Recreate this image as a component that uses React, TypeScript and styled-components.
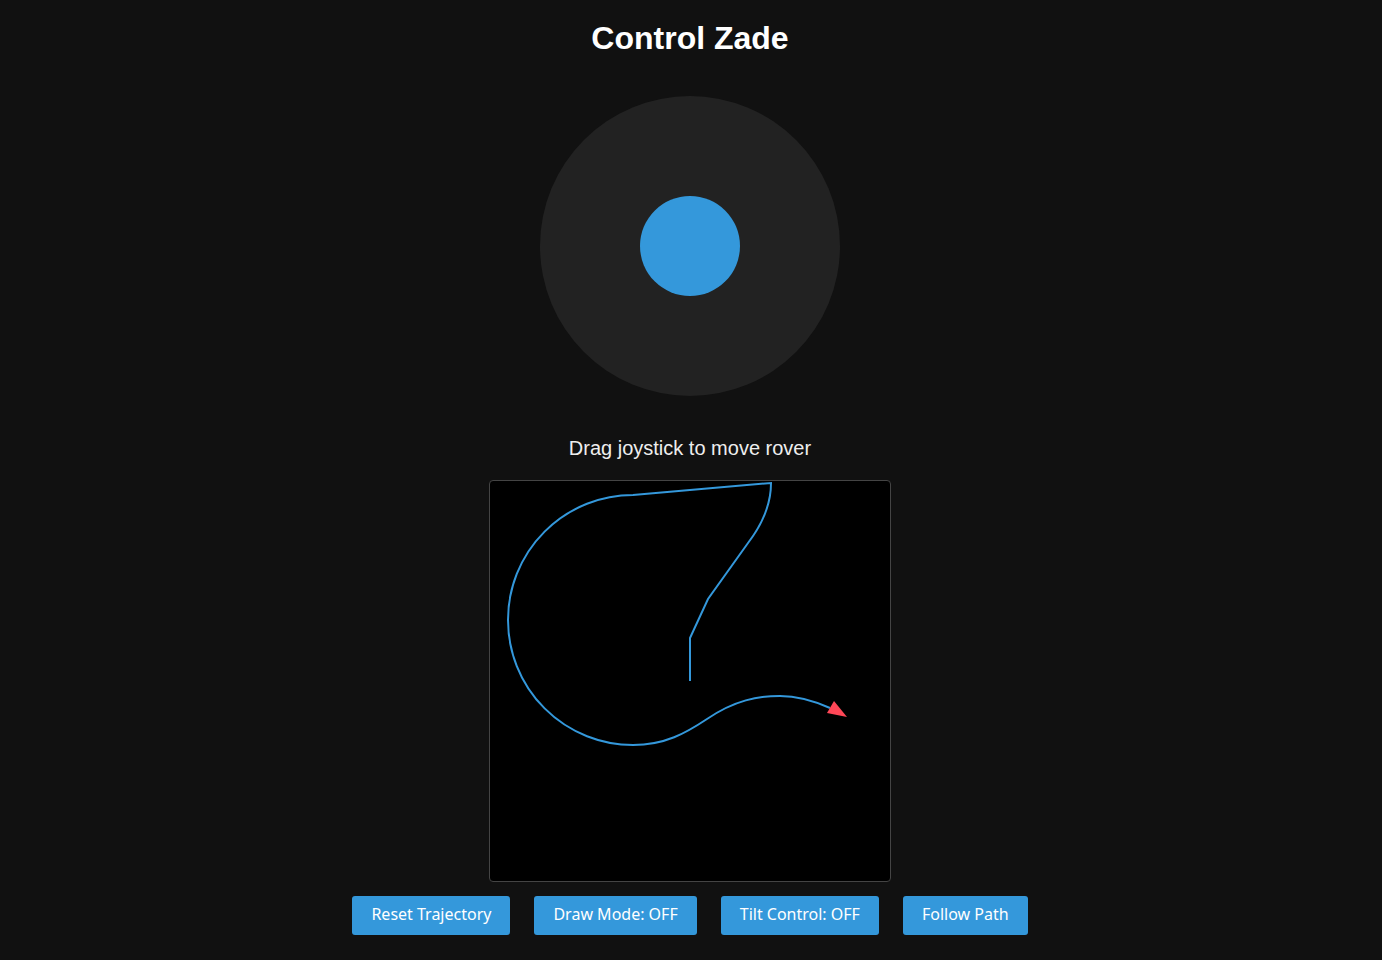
import styled, { createGlobalStyle } from "styled-components"

const GlobalStyle = createGlobalStyle`
  body {
    margin: 0;
    background: #111;
    color: #fff;
    font-family: "Liberation Sans", Arial, sans-serif;
  }
`

const buttons = ["Reset Trajectory", "Draw Mode: OFF", "Tilt Control: OFF", "Follow Path"]

export default function App() {
  return (
    <Page>
      <GlobalStyle />
      <Title>Control Zade</Title>
      <JoystickBase>
        <Knob />
      </JoystickBase>
      <Hint>Drag joystick to move rover</Hint>
      <Canvas>
        <svg width="400" height="400" viewBox="0 0 400 400">
          <path
            d="M200 200 L200 157 L218 118 L258 62 Q281 32 281 2 L143 14 A125 125 0 0 0 143 264 C175 264 196 252 217 238 C245 219 268 215 290 215 C308 215 322 219 340 227"
            fill="none"
            stroke="#3498db"
            strokeWidth="2"
          />
          <polygon points="337,232 344,220 357,236" fill="#ff4757" />
        </svg>
      </Canvas>
      <Controls>
        {buttons.map((b) => (
          <Button key={b}>{b}</Button>
        ))}
      </Controls>
    </Page>
  )
}

const Page = styled.div`
  display: flex;
  flex-direction: column;
  align-items: center;
  padding-top: 20px;
  padding-right: 2px;
`

const Title = styled.h1`
  margin: 0;
  font-size: 32px;
  line-height: 37px;
  font-weight: bold;
`

const JoystickBase = styled.div`
  width: 300px;
  height: 300px;
  margin-top: 39px;
  border-radius: 50%;
  background: #222;
  display: flex;
  align-items: center;
  justify-content: center;
`

const Knob = styled.div`
  width: 100px;
  height: 100px;
  border-radius: 50%;
  background: #3498db;
`

const Hint = styled.p`
  margin: 41px 0 0;
  font-size: 20px;
  line-height: 23px;
  color: #eee;
`

const Canvas = styled.div`
  margin-top: 20px;
  width: 400px;
  height: 400px;
  background: #000;
  border: 1px solid #444;
  border-radius: 4px;
  overflow: hidden;
  svg {
    display: block;
  }
`

const Controls = styled.div`
  display: flex;
  gap: 24px;
  margin-top: 14px;
`

const Button = styled.button`
  height: 39px;
  padding: 0 19px 3px;
  border: none;
  border-radius: 3px;
  background: #3498db;
  color: #fff;
  font-family: "Noto Sans", sans-serif;
  font-size: 16px;
  cursor: pointer;
`
